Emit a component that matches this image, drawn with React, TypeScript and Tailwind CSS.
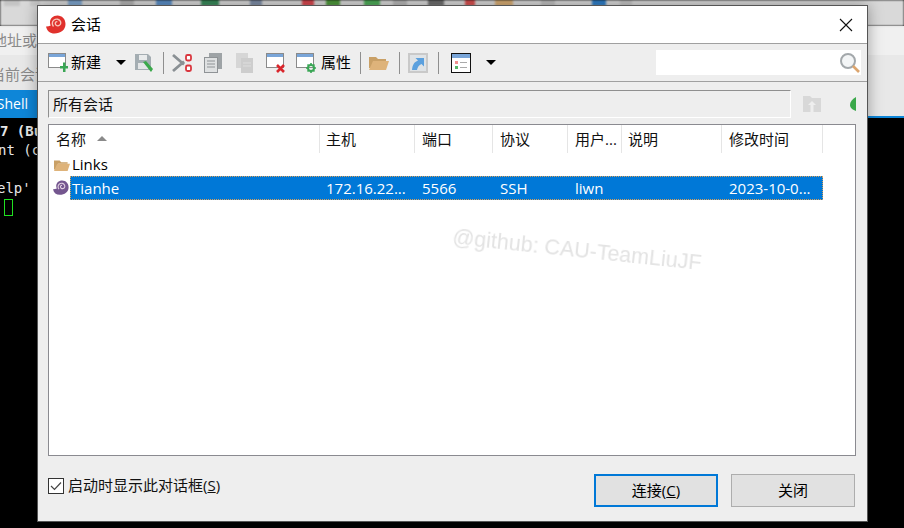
const cjk = "font-['Open_Sans','Noto_Sans_CJK_SC',sans-serif]";

function Snail({ color, inner, size }: { color: string; inner: string; size: number }) {
  return (
    <svg width={size} height={size} viewBox="0 0 20 20" className="shrink-0">
      <path d="M0 11.500c1 4.500 4 7 8.500 7 6 0 11-3.500 11-9.500 0-5-3.500-8.500-8-8.500-4.500 0-7.500 3-7.500 7 0 1.300.3 2.200.8 3C3 11.300 1.500 11.600 0 11.500z" fill={color} />
      <path d="M7.500 11.500c-1.800-2-1.500-5 .5-6.500 2.200-1.600 5.500-1 6.500 1.500.8 2-.3 4-2.300 4.300-1.500.2-2.900-.8-2.900-2.300 0-1.200 1-2 2-1.800" fill="none" stroke={inner} strokeWidth="1.400" />
    </svg>
  );
}

function WinIcon({ badge }: { badge?: React.ReactNode }) {
  return (
    <svg width="20" height="20" viewBox="0 0 20 20" className="shrink-0">
      <rect x="0.500" y="0.500" width="17" height="14" fill="#fff" stroke="#8a8a8a" />
      <rect x="1" y="1" width="16" height="3" fill="#79a5d8" />
      {badge}
    </svg>
  );
}

function FolderIcon({ w = 20, h = 15 }: { w?: number; h?: number }) {
  return (
    <svg width={w} height={h} viewBox="0 0 20 15" className="shrink-0">
      <path d="M0 2h7l2 2h8v2H5L2 13H0z" fill="#c9a066" />
      <path d="M4 6h16l-3 9H0z" fill="#deb37a" />
    </svg>
  );
}

function Sep() {
  return <div className="w-px h-[22px] bg-[#8f8f8f] shrink-0" />;
}

function Caret() {
  return <div className="w-0 h-0 border-x-[5px] border-x-transparent border-t-[5px] border-t-black shrink-0" />;
}

function Toolbar() {
  return (
    <div className="h-[37px] flex items-center pl-[10px] border-b border-[#a0a0a0] box-content shrink-0">
      <WinIcon badge={<path d="M15 9.500h2.500V13H20v2.500h-2.500V19H15v-3.500h-3V13h3z" fill="#3aa655" />} />
      <span className="ml-[3px] text-[15px] text-black w-[30px]">新建</span>
      <div className="ml-[15px]"><Caret /></div>
      <svg width="20" height="20" viewBox="0 0 20 20" className="ml-[8px] shrink-0">
        <path d="M1 1h13l3 3v13H1z" fill="#a4adb2" />
        <rect x="5" y="2" width="8" height="5" fill="#e9ebec" />
        <rect x="4" y="10" width="10" height="6" fill="#e3e5e6" />
        <path d="M9 9l3-1 7 8-2 3z" fill="#3aa84a" />
      </svg>
      <div className="ml-[9px]"><Sep /></div>
      <svg width="20" height="20" viewBox="0 0 20 20" className="ml-[8px] shrink-0">
        <path d="M1 2l11 9.500M1 18l11-9.500" stroke="#8a9094" strokeWidth="2.800" fill="none" />
        <rect x="14" y="2" width="5" height="5.500" rx="1.500" fill="#fff" stroke="#d9363e" strokeWidth="1.800" />
        <rect x="14" y="12.500" width="5" height="5.500" rx="1.500" fill="#fff" stroke="#d9363e" strokeWidth="1.800" />
      </svg>
      <svg width="18" height="20" viewBox="0 0 18 20" className="ml-[12px] shrink-0">
        <rect x="5" y="0" width="13" height="16" fill="#9ea3a6" />
        <rect x="0.500" y="4.500" width="13" height="15" fill="#dfe1e2" stroke="#8f9396" />
        <path d="M3 8h8M3 11h8M3 14h8" stroke="#8f9396" />
      </svg>
      <svg width="18" height="20" viewBox="0 0 18 20" className="ml-[13px] shrink-0">
        <rect x="1" y="0" width="12" height="15" fill="#d6d6d6" />
        <rect x="6" y="5" width="12" height="15" fill="#cdcdcd" />
        <path d="M8 10h8M8 13h8" stroke="#dedede" />
      </svg>
      <div className="ml-[13px]">
        <WinIcon badge={<path d="M11 12l7 7M18 12l-7 7" stroke="#d9262c" strokeWidth="2.600" />} />
      </div>
      <div className="ml-[10px]">
        <WinIcon
          badge={
            <g>
              <circle cx="15" cy="15" r="3" fill="none" stroke="#3aa655" strokeWidth="2" />
              <path d="M15 10v2M15 18v2M10 15h2M18 15h2M11.500 11.500l1.500 1.500M17 17l1.500 1.500M18.500 11.500L17 13M13 17l-1.500 1.500" stroke="#3aa655" strokeWidth="1.600" />
            </g>
          }
        />
      </div>
      <span className="ml-[5px] text-[15px] text-black w-[30px]">属性</span>
      <div className="ml-[9px]"><Sep /></div>
      <div className="ml-[8px]"><FolderIcon /></div>
      <div className="ml-[10px]"><Sep /></div>
      <svg width="20" height="20" viewBox="0 0 20 20" className="ml-[8px] shrink-0">
        <rect width="20" height="20" fill="#c9c9c9" />
        <rect x="2" y="2" width="16" height="16" fill="#dfe3e6" />
        <path d="M4 17c.5-5 2-8 6-9.500L7.500 5H16v8.500L13.500 11c-2.500 1-4 3-4.500 6z" fill="#5ba0de" />
      </svg>
      <div className="ml-[10px]"><Sep /></div>
      <svg width="20" height="20" viewBox="0 0 20 20" className="ml-[12px] shrink-0">
        <rect x="0.500" y="0.500" width="19" height="19" fill="#fff" stroke="#111" />
        <rect x="1" y="1" width="18" height="4" fill="#79a5d8" />
        <rect x="4" y="8" width="3" height="3" fill="#ef8f8f" />
        <rect x="4" y="13" width="3" height="3" fill="#55b868" />
        <path d="M9 9.500h7M9 14.500h7" stroke="#aaa" />
      </svg>
      <div className="ml-[15px]"><Caret /></div>
      <div className="ml-[160px] w-[205px] h-[25px] bg-white flex items-center justify-end pr-[1px]">
        <svg width="21" height="21" viewBox="0 0 21 21">
          <circle cx="9" cy="9" r="7" fill="#f3f5f6" stroke="#a3a8ab" strokeWidth="2" />
          <path d="M14 14l6 6" stroke="#dca56e" strokeWidth="2.600" />
        </svg>
      </div>
    </div>
  );
}

function PathRow() {
  return (
    <div className="flex items-center pl-[10px] pt-[8px] shrink-0">
      <div className="w-[743px] h-[28px] bg-[#eeeeee] border-t border-l border-[#8f8f8f] border-r-white border-b-white border-r border-b flex items-center pl-[4px] text-[15px] text-[#111]">
        所有会话
      </div>
      <svg width="20" height="20" viewBox="0 0 20 20" className="ml-[11px] shrink-0">
        <path d="M1 2h7l2 2h9v14H1z" fill="#d8d8d8" />
        <path d="M10 7l4 4h-2.500v7h-3v-7H6z" fill="#eeeeee" />
      </svg>
      <svg width="6" height="16" viewBox="0 0 6 16" className="ml-[28px] shrink-0">
        <path d="M6 1C2 3 0 6 0 9c0 3 3 5 6 6z" fill="#3aa84a" />
      </svg>
    </div>
  );
}

function SessionList() {
  const headerCols = [
    ["名称", "pl-[7px]"],
    ["主机", "pl-[6px]"],
    ["端口", "pl-[7px]"],
    ["协议", "pl-[7px]"],
    ["用户...", "pl-[7px]"],
    ["说明", "pl-[6px]"],
    ["修改时间", "pl-[7px]"],
  ];
  const row = ["Tianhe", "172.16.22...", "5566", "SSH", "liwn", "", "2023-10-0..."];
  return (
    <div className="relative ml-[10px] mt-[6px] w-[808px] h-[332px] bg-white border border-[#8a8a90] text-[15px] overflow-hidden shrink-0">
      <div className="grid grid-cols-[271px_95px_78px_75px_54px_100px_101px] w-[774px] h-[28px]">
        {headerCols.map(([label, pad], i) => (
          <div key={label} className={`flex items-center border-r border-[#e5e5e5] text-[#111] ${pad}`}>
            {label}
            {i === 0 && <div className="ml-[11px] mb-[2px] w-0 h-0 border-x-[5px] border-x-transparent border-b-[5px] border-b-[#8a8a8a]" />}
          </div>
        ))}
      </div>
      <div className="flex items-center h-[23px] pl-[5px] text-black">
        <div className="w-[18px]"><FolderIcon w={16} h={12} /></div>
        <span className="text-[15px] -mt-[1px]">Links</span>
      </div>
      <div className="flex items-center h-[24px] pl-[4px]">
        <div className="w-[17px]"><Snail color="#74568f" inner="#e0cfe0" size={16} /></div>
        <div className="grid grid-cols-[249px_95px_78px_75px_54px_100px_100px] items-center w-[753px] h-[24px] bg-[#0078d7] border border-dotted border-[#d9a05a] text-white">
          {row.map((c, i) => (
            <div key={i} className={i === 0 ? "pl-[1px]" : i === 1 ? "pl-[6px]" : "pl-[7px]"}>{c}</div>
          ))}
        </div>
      </div>
      <div className="absolute left-[403px] top-[109px] rotate-[6deg] text-[21.5px] text-[#e3e3e3] blur-[0.4px] font-['Liberation_Sans',sans-serif] whitespace-nowrap">
        @github: CAU-TeamLiuJF
      </div>
    </div>
  );
}

function Footer() {
  return (
    <div className="flex items-center pl-[10px] mt-[18px] shrink-0">
      <div className="flex items-center w-[546px] mb-[10px]">
        <div className="w-[16px] h-[16px] bg-white border border-[#333] flex items-center justify-center">
          <svg width="12" height="12" viewBox="0 0 12 12">
            <path d="M1 6l3.500 3.500L11 2.500" fill="none" stroke="#444" strokeWidth="1.200" />
          </svg>
        </div>
        <span className="ml-[4px] text-[15px] text-[#111]">
          启动时显示此对话框(<span className="underline">S</span>)
        </span>
      </div>
      <button className="w-[124px] h-[33px] bg-[#e1e1e1] border-2 border-[#0078d7] text-[15px] text-black">
        连接(<span className="underline">C</span>)
      </button>
      <button className="ml-[13px] w-[124px] h-[33px] bg-[#e1e1e1] border border-[#adadad] text-[15px] text-black">
        关闭
      </button>
    </div>
  );
}

function Dialog() {
  return (
    <div className={`absolute left-[37px] top-[5px] w-[831px] h-[517px] bg-[#eeeeee] border border-[#555] shadow-[0_0_14px_rgba(0,0,0,0.35)] flex flex-col ${cjk}`}>
      <div className="h-[37px] bg-white flex items-center pl-[8px] pr-[12px] border-b border-[#a0a0a0] box-content shrink-0">
        <Snail color="#e0312c" inner="#f7c4b8" size={20} />
        <span className="ml-[5px] text-[15px] text-black">会话</span>
        <svg width="14" height="14" viewBox="0 0 14 14" className="ml-auto mr-[2px]">
          <path d="M1 1l12 12M13 1L1 13" stroke="#111" strokeWidth="1.100" />
        </svg>
      </div>
      <Toolbar />
      <PathRow />
      <SessionList />
      <Footer />
    </div>
  );
}

function Backdrop() {
  return (
    <div className={`w-[904px] h-[528px] bg-black flex flex-col overflow-hidden ${cjk}`}>
      {/* main window toolbar, mostly hidden behind the dialog */}
      <div className="h-[26px] bg-[#d9d9d9] shrink-0 flex items-start pl-[4px] blur-[1px]">
        <div className="w-[16px] h-[6px] bg-[#c4c4c4]" />
        <div className="ml-[10px] w-[10px] h-[6px] bg-[#cacaca]" />
        <div className="ml-[28px] w-[14px] h-[6px] bg-[#7fa6cf]" />
        <div className="ml-[38px] w-[14px] h-[6px] bg-[#b5b5b5]" />
        <div className="ml-[22px] w-[16px] h-[6px] bg-[#5b8fc8]" />
        <div className="ml-[29px] w-[18px] h-[6px] bg-[#3a8c5c]" />
        <div className="ml-[31px] w-[12px] h-[6px] bg-[#7f8fa8]" />
        <div className="ml-[40px] w-[12px] h-[6px] bg-[#d9484f]" />
        <div className="ml-[12px] w-[14px] h-[6px] bg-[#4f9a3c]" />
        <div className="ml-[24px] w-[16px] h-[6px] bg-[#4fae5a]" />
        <div className="ml-[13px] w-[14px] h-[6px] bg-[#b8b8b8]" />
        <div className="ml-[21px] w-[16px] h-[6px] bg-[#6f6f6f]" />
        <div className="ml-[21px] w-[10px] h-[6px] bg-[#d8504f]" />
        <div className="ml-[20px] w-[18px] h-[6px] bg-[#d8ad74]" />
        <div className="ml-[28px] w-[14px] h-[6px] bg-[#c0c0c0]" />
        <div className="ml-[37px] w-[14px] h-[6px] bg-[#2f7fc9]" />
        <div className="ml-[14px] w-[12px] h-[6px] bg-[#c4c4c4]" />
      </div>
      <div className="h-[29px] bg-[#f0f0f0] text-[#8a8a8a] text-[15px] flex items-center -ml-[8px] shrink-0">地址或</div>
      <div className="h-[35px] pt-[3px] bg-[#e8e8e8] text-[#8a8a8a] text-[15px] flex items-center -ml-[10px] shrink-0">当前会话</div>
      <div className="h-[28px] bg-[#e8e8e8] shrink-0">
        <div className="w-[37px] h-[27px] bg-[#0e86d8] text-white text-[14px] flex items-center justify-end pr-[9px]">Shell</div>
        <div className="h-[2px] bg-[#0e86d8] -mt-[1px]" />
      </div>
      <div className="w-[37px] pt-[4px] overflow-hidden font-['DejaVu_Sans_Mono',monospace] text-[14px] leading-[19px] text-[#e6e6e6] whitespace-nowrap">
        <div className="font-bold">7 (Bu</div>
        <div className="-ml-[2px]">nt (c</div>
        <div>&nbsp;</div>
        <div className="-ml-[3px]">elp'</div>
        <div className="ml-[4px] mt-[1px] w-[9px] h-[17px] border border-[#21e021]" />
      </div>
    </div>
  );
}

export default function App() {
  return (
    <div className="relative w-[904px] h-[528px] overflow-hidden">
      <Backdrop />
      <Dialog />
    </div>
  );
}
